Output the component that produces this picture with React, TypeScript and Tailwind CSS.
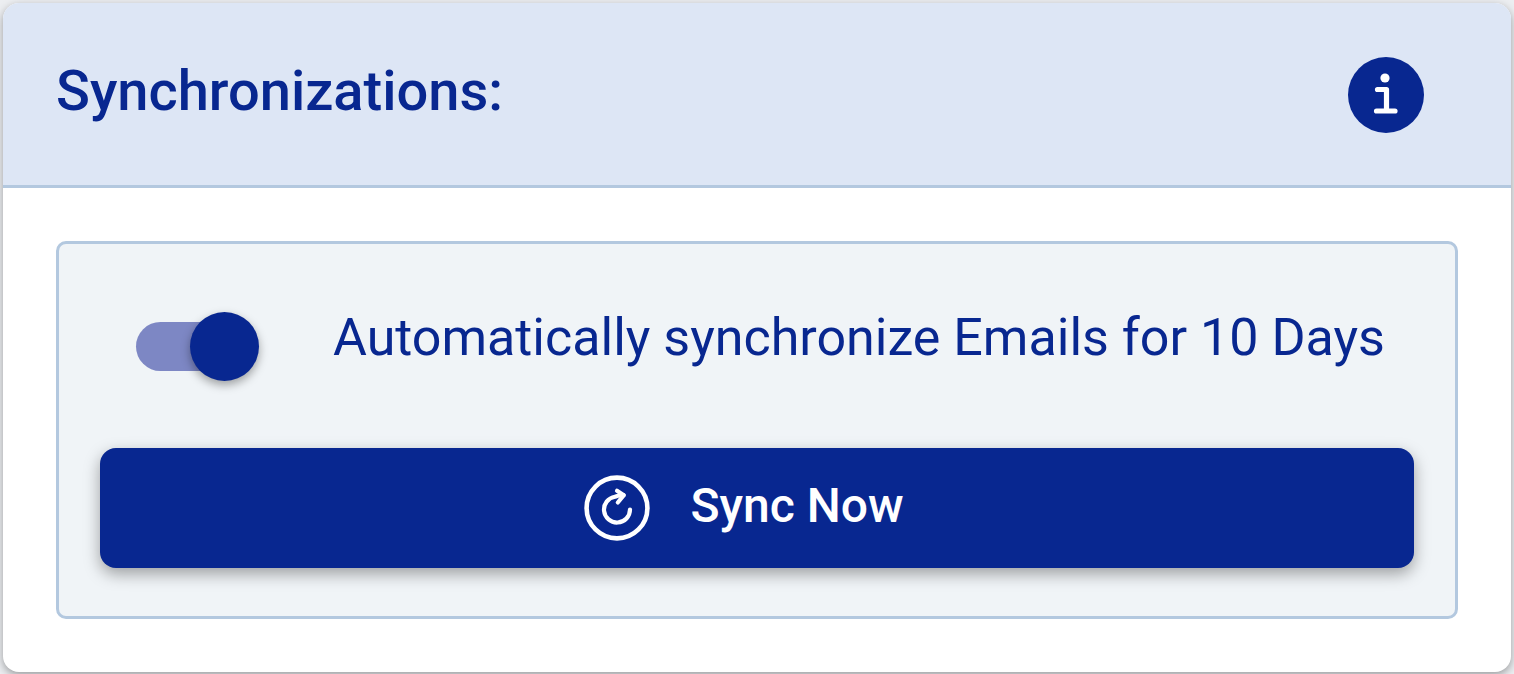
import { useState } from "react";

const InfoIcon = () => (
  <svg viewBox="0 0 76 76" className="h-[76px] w-[76px]" aria-hidden="true">
    <circle cx="38" cy="38" r="38" fill="#082790" />
    <circle cx="37" cy="21" r="4.6" fill="white" />
    <path
      d="M29.5 32.5h9v21.5M28.5 54h18.5"
      fill="none"
      stroke="white"
      strokeWidth="5.2"
      strokeLinecap="round"
      strokeLinejoin="round"
    />
  </svg>
);

const SyncIcon = () => (
  <svg
    viewBox="0 0 66 66"
    className="h-[66px] w-[66px]"
    fill="none"
    stroke="white"
    strokeLinecap="round"
    strokeLinejoin="round"
    aria-hidden="true"
  >
    <circle cx="33" cy="33" r="30.4" strokeWidth="4.6" />
    <path d="M46 34.5A13 13 0 1 1 31 21.7Q34.5 20.2 39.5 20.2" strokeWidth="4.2" />
    <path d="M33 15.8L39.8 20.2L33.8 27.5" strokeWidth="4.2" />
  </svg>
);

const App = () => {
  const [autoSync, setAutoSync] = useState(true);

  return (
    <div className="min-h-screen bg-[#eceef1] p-[3px] font-['Roboto',sans-serif] text-[#082790]">
      <section className="overflow-hidden rounded-2xl bg-white shadow-[0_3px_8px_rgba(0,0,0,0.35)]">
        <header className="flex items-start justify-between border-b-3 border-[#b3c8df] bg-[#dde6f5] pt-[54px] pr-[87px] pb-[52px] pl-[53px]">
          <h1 className="text-[56px] leading-[68px] font-medium">
            Synchronizations:
          </h1>
          <button type="button" aria-label="Information">
            <InfoIcon />
          </button>
        </header>
        <div className="p-[53px]">
          <div className="rounded-[10px] border-3 border-[#b3c8df] bg-[#f0f4f7] px-[41px] pt-[60px] pb-12">
            <div className="flex items-center pl-9">
              <input
                id="auto-sync"
                type="checkbox"
                role="switch"
                checked={autoSync}
                onChange={(e) => setAutoSync(e.target.checked)}
                className="relative mt-4 h-[49px] w-[110px] shrink-0 cursor-pointer appearance-none rounded-full bg-[#a9afbb] before:absolute before:-top-[10px] before:-left-[13px] before:h-[69px] before:w-[69px] before:rounded-full before:bg-white before:shadow-[0_4px_10px_rgba(0,0,0,0.35)] checked:bg-[#7d87c4] checked:before:left-[54px] checked:before:bg-[#082790]"
              />
              <label
                htmlFor="auto-sync"
                className="cursor-pointer pl-[87px] text-[52px] leading-[68px] whitespace-nowrap"
              >
                Automatically synchronize Emails for 10 Days
              </label>
            </div>
            <button
              type="button"
              className="mt-[76px] flex h-[120px] w-full cursor-pointer items-center justify-center gap-10 rounded-2xl bg-[#082790] pr-[26px] text-[48px] leading-[56px] font-medium text-white shadow-[0_6px_16px_rgba(0,0,0,0.35)]"
            >
              <SyncIcon />
              <span className="pb-1">Sync Now</span>
            </button>
          </div>
        </div>
      </section>
    </div>
  );
};

export default App;
